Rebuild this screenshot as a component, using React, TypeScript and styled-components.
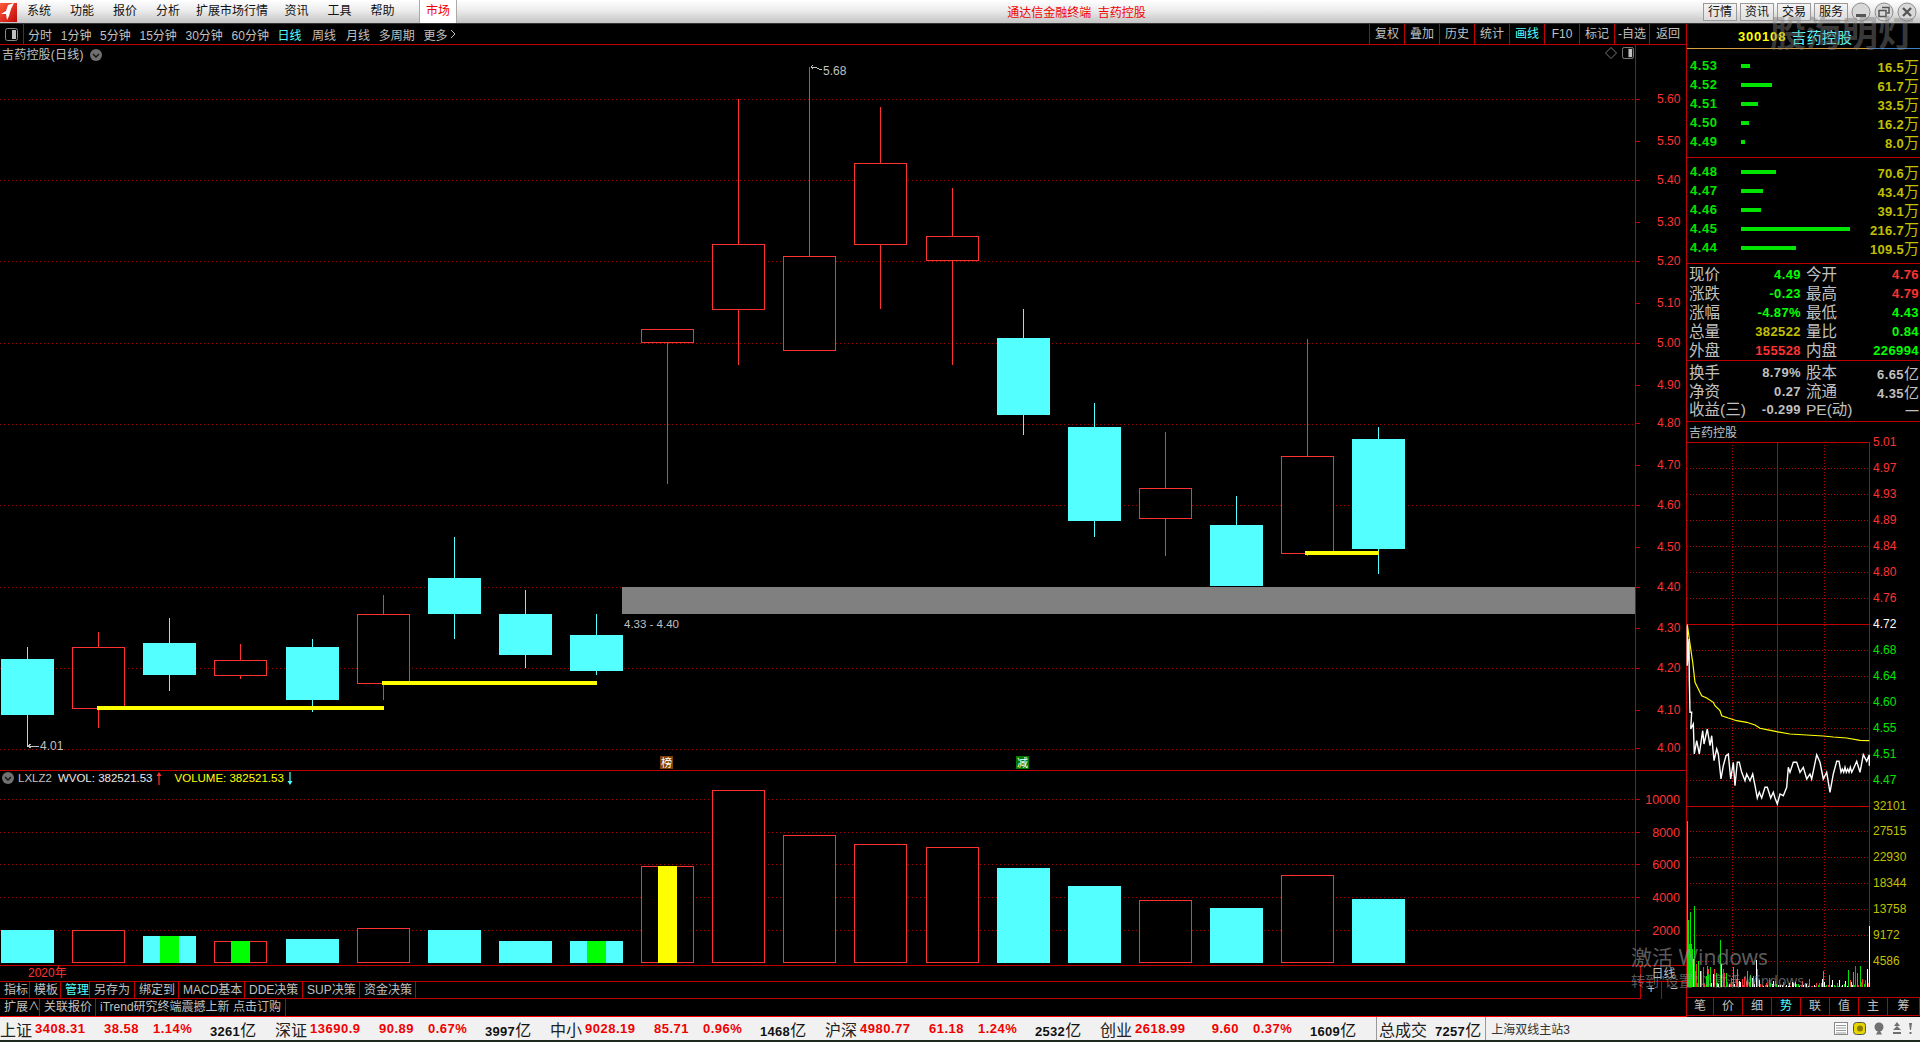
import React from "react";
import styled, { createGlobalStyle } from "styled-components";

const GlobalStyle = createGlobalStyle`
  html, body {
    margin: 0;
    padding: 0;
    background: #000;
    overflow: hidden;
  }
  body {
    font-family: "Liberation Sans", "Noto Sans CJK SC", sans-serif;
    font-size: 12px;
    color: #c0c0c0;
  }
`;

const FRAME = "#c00000";
const RED = "#ff3232";
const CYAN = "#54ffff";
const GREEN = "#00e600";
const KHAKI = "#c0c000";
const GREY = "#c0c0c0";

const Screen = styled.div`
  position: relative;
  width: 1920px;
  height: 1042px;
  display: flex;
  flex-direction: column;
  overflow: hidden;
  background: #000;
`;

/* title bar */
const TitleBar = styled.div`
  height: 23px;
  flex: none;
  display: flex;
  align-items: center;
  color: #111;
  background: linear-gradient(#ffffff, #ececec 45%, #c4c4c4);
  border-bottom: 1px solid #333;
`;
const Logo = styled.svg`
  width: 17px;
  height: 20px;
  margin-right: 0.5px;
  flex: none;
`;
const Menu = styled.div<{ $l?: number; $r?: number }>`
  padding: 0 ${(p) => p.$r ?? 9.5}px 0 ${(p) => p.$l ?? 9.5}px;
  line-height: 23px;
  white-space: nowrap;
`;
const MarketTab = styled.div`
  width: 38px;
  height: 23px;
  margin-left: 15px;
  box-sizing: border-box;
  line-height: 22px;
  text-align: center;
  color: #f00000;
  background: #fff;
  border-left: 1px solid #aaa;
  border-right: 1px solid #aaa;
`;
const AppTitle = styled.div`
  margin-left: 550px;
  color: #f00000;
  white-space: nowrap;
`;
const QuickButtons = styled.div`
  margin-left: auto;
  display: flex;
  align-items: center;
  gap: 3px;
  padding-right: 3px;
`;
const QuickButton = styled.div`
  width: 34px;
  height: 18px;
  box-sizing: border-box;
  border: 1px solid #9a9a9a;
  line-height: 16px;
  text-align: center;
  background: linear-gradient(#f4f4f4, #dcdcdc);
`;
const WindowButton = styled.svg`
  width: 20px;
  height: 20px;
  flex: none;
`;

/* main body */
const Body = styled.div`
  flex: none;
  height: 993px;
  display: grid;
  grid-template-columns: 1686px 234px;
`;
const LeftColumn = styled.div`
  position: relative;
  display: flex;
  flex-direction: column;
`;
const Toolbar = styled.div`
  height: 20px;
  flex: none;
  display: flex;
  align-items: center;
  border-bottom: 1px solid ${FRAME};
`;
const SideIconCell = styled.div`
  width: 23px;
  height: 20px;
  display: flex;
  align-items: center;
  justify-content: center;
  border-right: 1px solid ${FRAME};
  flex: none;
`;
const PeriodList = styled.div`
  display: flex;
  align-items: center;
  gap: 8.7px;
  padding-left: 4px;
`;
const Period = styled.span<{ $on?: boolean; $ml?: number }>`
  color: ${(p) => (p.$on ? CYAN : GREY)};
  margin-left: ${(p) => p.$ml ?? 0}px;
  white-space: nowrap;
  display: inline-flex;
  align-items: center;
  gap: 2px;
`;
const ToolCells = styled.div`
  margin-left: auto;
  display: flex;
  height: 20px;
`;
const ToolCell = styled.div<{ $on?: boolean }>`
  width: 35px;
  box-sizing: border-box;
  border-left: 1px solid ${FRAME};
  line-height: 20px;
  text-align: center;
  white-space: nowrap;
  color: ${(p) => (p.$on ? CYAN : GREY)};
  &:last-child {
    width: 37px;
  }
`;

const ChartPane = styled.div<{ $h: number }>`
  position: relative;
  height: ${(p) => p.$h}px;
  flex: none;
  border-bottom: 1px solid ${FRAME};
`;
const ChartSvg = styled.svg`
  display: block;
  overflow: visible;
  shape-rendering: crispEdges;
`;
const ChartTitle = styled.div`
  position: absolute;
  left: 2px;
  top: 2px;
  display: flex;
  align-items: center;
  gap: 6px;
  line-height: 16px;
  letter-spacing: 0.2px;
`;
const PaneCorner = styled.div`
  position: absolute;
  right: 52px;
  top: 2px;
  display: flex;
  align-items: center;
  gap: 5px;
`;
const VolumeLegend = styled.div`
  position: absolute;
  left: 2px;
  top: 0;
  display: flex;
  align-items: center;
  height: 14px;
  white-space: nowrap;
  font-size: 11.5px;
`;
const LegendText = styled.span<{ $c: string; $ml: number }>`
  color: ${(p) => p.$c};
  margin-left: ${(p) => p.$ml}px;
`;
const AxisText = styled.text<{ $c?: string; $size?: number }>`
  fill: ${(p) => p.$c ?? RED};
  font-size: ${(p) => p.$size ?? 12}px;
  shape-rendering: auto;
`;

const TimeStrip = styled.div`
  height: 15px;
  flex: none;
  box-sizing: content-box;
  padding-left: 28px;
  line-height: 15px;
  color: ${RED};
  border-bottom: 1px solid ${FRAME};
`;
const TabRow = styled.div<{ $h: number; $line: string }>`
  height: ${(p) => p.$h}px;
  flex: none;
  display: flex;
  border-bottom: 1px solid ${(p) => p.$line};
`;
const BottomTab = styled.div<{ $w: number; $on?: boolean }>`
  width: ${(p) => p.$w}px;
  box-sizing: border-box;
  padding-left: 4px;
  border-right: 1px solid ${FRAME};
  line-height: 16px;
  white-space: nowrap;
  overflow: hidden;
  color: ${(p) => (p.$on ? CYAN : GREY)};
`;
const ZoomBox = styled.div`
  position: absolute;
  right: 0;
  bottom: 18px;
  width: 46px;
  height: 33px;
  box-sizing: border-box;
  display: grid;
  grid-template-columns: 20px 1fr;
  grid-template-rows: 16px 1fr;
  background: #000;
  border-left: 1px solid ${FRAME};
`;
const ZoomTitle = styled.div`
  grid-column: 1 / 3;
  text-align: center;
  line-height: 16px;
  border-bottom: 1px solid ${FRAME};
`;
const ZoomSign = styled.div`
  text-align: center;
  line-height: 14px;
  font-size: 13px;
  & + & {
    border-left: 1px solid ${FRAME};
  }
`;

/* right column */
const RightColumn = styled.div`
  display: flex;
  flex-direction: column;
  border-left: 1px solid ${FRAME};
  width: 234px;
  box-sizing: border-box;
`;
const QuoteHeader = styled.div`
  height: 25px;
  flex: none;
  display: flex;
  align-items: center;
  gap: 5px;
  padding-left: 51px;
  background: linear-gradient(90deg, #d8a040 0 182px, #3f80c4 182px) bottom / 100% 1px no-repeat;
`;
const QuoteCode = styled.span`
  color: #ffff00;
  font-weight: 700;
  font-size: 13px;
  letter-spacing: 0.8px;
`;
const QuoteName = styled.span`
  color: ${CYAN};
  font-size: 15px;
  letter-spacing: 0.3px;
`;
const DepthBlock = styled.div<{ $h: number; $top: number }>`
  height: ${(p) => p.$h}px;
  box-sizing: border-box;
  flex: none;
  padding-top: ${(p) => p.$top}px;
  border-bottom: 1px solid ${FRAME};
`;
const DepthRow = styled.div`
  height: 19px;
  display: flex;
  align-items: center;
  padding: 0 1px 0 3px;
`;
const DepthPrice = styled.span`
  width: 51px;
  flex: none;
  color: ${GREEN};
  font-weight: 700;
  font-size: 13px;
  letter-spacing: 0.6px;
`;
const BarTrack = styled.div`
  flex: 1;
`;
const DepthBar = styled.div`
  height: 4px;
  background: ${GREEN};
`;
const DepthVolume = styled.span`
  color: ${KHAKI};
  font-weight: 700;
  font-size: 13px;
  letter-spacing: 0.3px;
  white-space: nowrap;
`;
const Unit = styled.span<{ $size?: number }>`
  font-size: ${(p) => p.$size ?? 15}px;
  font-weight: 400;
  letter-spacing: 0;
`;
const StatBlock = styled.div<{ $h: number; $top: number }>`
  height: ${(p) => p.$h}px;
  box-sizing: border-box;
  flex: none;
  padding-top: ${(p) => p.$top}px;
  border-bottom: 1px solid ${FRAME};
`;
const StatRow = styled.div`
  height: 19px;
  display: grid;
  grid-template-columns: 60px 52px 52px 1fr;
  align-items: center;
  padding: 0 1px 0 2px;
  white-space: nowrap;
`;
const StatLabel = styled.span<{ $second?: boolean }>`
  font-size: 15.5px;
  line-height: 19px;
  color: ${GREY};
  padding-left: ${(p) => (p.$second ? 5 : 0)}px;
`;
const StatValue = styled.span<{ $c: string }>`
  color: ${(p) => p.$c};
  font-weight: 700;
  font-size: 13px;
  letter-spacing: 0.4px;
  text-align: right;
`;
const NameRow = styled.div`
  height: 20px;
  flex: none;
  line-height: 23px;
  padding-left: 2px;
  font-size: 12px;
`;
const MiniPane = styled.div`
  height: 546px;
  flex: none;
`;
const MiniGap = styled.div`
  height: 9px;
  flex: none;
  border-bottom: 1px solid ${FRAME};
`;
const ViewTabs = styled.div`
  height: 17px;
  flex: none;
  display: flex;
  border-bottom: 1px solid ${FRAME};
`;
const ViewTab = styled.div<{ $w: number; $on?: boolean }>`
  width: ${(p) => p.$w}px;
  box-sizing: border-box;
  border-right: 1px solid ${FRAME};
  text-align: center;
  line-height: 17px;
  color: ${(p) => (p.$on ? CYAN : GREY)};
`;

/* status bar */
const StatusBar = styled.div`
  flex: none;
  height: 23px;
  display: flex;
  align-items: center;
  background: #f1f1f1;
  color: #111;
  border-bottom: 2px solid #1d2a1d;
  white-space: nowrap;
`;
const IndexGroup = styled.div`
  width: 275px;
  flex: none;
  display: grid;
  grid-template-columns: 35px 68px 36px 71px 65px;
  align-items: center;
`;
const IndexName = styled.span`
  font-size: 16px;
  color: #222;
`;
const IndexValue = styled.span<{ $right?: boolean; $pad?: boolean }>`
  color: #f00000;
  font-weight: 700;
  font-size: 13px;
  letter-spacing: 0.5px;
  text-align: ${(p) => (p.$right ? "right" : "left")};
  padding-left: ${(p) => (p.$pad ? 14 : 0)}px;
`;
const Turnover = styled.span`
  font-weight: 700;
  font-size: 13px;
  letter-spacing: 0.3px;
  color: #111;
`;
const TotalCell = styled.div`
  height: 23px;
  margin-left: 1px;
  padding: 0 4px 0 2px;
  display: flex;
  align-items: center;
  gap: 8px;
  border-left: 1px solid #999;
  border-right: 1px solid #999;
`;
const Station = styled.span`
  margin-left: 5px;
  color: #333;
`;
const TrayIcons = styled.div`
  margin-left: auto;
  display: flex;
  align-items: center;
  gap: 5px;
  padding-right: 7px;
`;
const TraySvg = styled.svg<{ $ml?: number }>`
  margin-left: ${(p) => p.$ml ?? 0}px;
  flex: none;
`;

/* ghost text over the page */
const GhostMark = styled.div`
  position: absolute;
  left: 1770px;
  top: 13px;
  font-size: 36px;
  font-weight: 700;
  line-height: 44px;
  white-space: nowrap;
  color: rgba(128, 128, 128, 0.45);
  pointer-events: none;
`;
const ActivateNote = styled.div`
  position: absolute;
  left: 1631px;
  top: 943px;
  color: rgba(150, 150, 150, 0.62);
  font-family: "Noto Sans", "Noto Sans CJK SC", sans-serif;
  pointer-events: none;
  white-space: nowrap;
`;
const ActivateTitle = styled.div`
  font-size: 21px;
  line-height: 28px;
`;
const ActivateHint = styled.div`
  font-size: 14px;
  line-height: 20px;
`;

type Candle = [up: boolean, top: number, bottom: number, high: number, low: number];

const candles: Candle[] = [
  [false, 659, 715, 647, 747],
  [true, 647, 708, 632, 728],
  [false, 643, 675, 618, 691],
  [true, 660, 675, 644, 679],
  [false, 647, 700, 639, 712],
  [true, 614, 683, 595, 700],
  [false, 578, 614, 537, 639],
  [false, 614, 655, 590, 668],
  [false, 635, 671, 614, 675],
  [true, 329, 342, 330, 484],
  [true, 244, 309, 99, 365],
  [true, 256, 350, 67, 350],
  [true, 163, 244, 107, 309],
  [true, 236, 260, 188, 365],
  [false, 338, 415, 309, 435],
  [false, 427, 521, 403, 537],
  [true, 488, 518, 432, 556],
  [false, 525, 586, 496, 586],
  [true, 456, 553, 339, 556],
  [false, 439, 549, 427, 574],
];
const candleX = (i: number) => Math.floor(27.7 + i * 71.1);

const priceLabels: [string, number][] = [
  ["5.60", 99], ["5.50", 141], ["5.40", 180], ["5.30", 222], ["5.20", 261], ["5.10", 303],
  ["5.00", 343], ["4.90", 385], ["4.80", 423], ["4.70", 465], ["4.60", 505], ["4.50", 547],
  ["4.40", 587], ["4.30", 628], ["4.20", 668], ["4.10", 710], ["4.00", 748],
];
const priceGrid = [99, 180, 261, 343, 424, 505, 587, 668, 749];

const volumes: [boolean, number][] = [
  [false, 930], [true, 930], [false, 936], [true, 941], [false, 939], [true, 928], [false, 930],
  [false, 941], [false, 941], [true, 866], [true, 790], [true, 835], [true, 844], [true, 847],
  [false, 868], [false, 886], [true, 900], [false, 908], [true, 875], [false, 899],
];
const volumeLabels: [string, number][] = [
  ["10000", 799], ["8000", 832], ["6000", 864], ["4000", 897], ["2000", 930],
];

const asks: [string, number, string][] = [
  ["4.53", 9, "16.5"], ["4.52", 31, "61.7"], ["4.51", 17, "33.5"], ["4.50", 8, "16.2"], ["4.49", 4, "8.0"],
];
const bids: [string, number, string][] = [
  ["4.48", 35, "70.6"], ["4.47", 22, "43.4"], ["4.46", 20, "39.1"], ["4.45", 109, "216.7"], ["4.44", 55, "109.5"],
];

const whitePoints = [
  142,80, 142,200, 147,120, 148,240, 150,340, 155,340, 152,390, 160,375, 163,465, 170,425, 178,465, 188,395, 192,435,
  202,390, 210,440, 215,410, 222,485, 230,450, 235,465, 243,540, 250,500, 258,470, 265,465, 272,540, 280,490, 285,560,
  292,490, 298,490, 305,520, 315,545, 320,525, 330,545, 338,525, 345,560, 352,597, 358,580, 365,597, 375,565, 382,565,
  392,597, 400,580, 405,597, 412,615, 420,585, 430,590, 440,565, 445,505, 450,520, 460,490, 470,490, 480,520, 490,505,
  500,540, 510,525, 515,540, 530,467, 540,490, 550,540, 560,520, 570,580, 580,525, 590,487, 597,487, 603,520, 607,510,
  611,520, 615,505, 619,520, 623,510, 627,520, 631,505, 635,520, 640,510, 650,487, 660,520, 670,467, 680,487, 688,467, 688,500,
];
const yellowPoints = [
  142,76, 148,120, 158,190, 165,250, 175,270, 185,290, 200,297, 220,310, 225,320, 240,335, 245,350, 265,357, 290,365,
  320,370, 345,378, 360,388, 380,392, 410,398, 450,405, 500,408, 550,411, 580,414, 620,417, 660,424, 688,425,
];
const toPolyline = (zoomed: number[]) => {
  const out: string[] = [];
  for (let i = 0; i < zoomed.length; i += 2) {
    out.push(`${(1640 + zoomed[i] / 3).toFixed(1)},${(600 + zoomed[i + 1] / 3).toFixed(1)}`);
  }
  return out.join(" ");
};

const miniLabels: [string, string, number][] = [
  ["5.01", RED, 443], ["4.97", RED, 469], ["4.93", RED, 495], ["4.89", RED, 521], ["4.84", RED, 547], ["4.80", RED, 573],
  ["4.76", RED, 599], ["4.72", "#ffffff", 625], ["4.68", GREEN, 651], ["4.64", GREEN, 677], ["4.60", GREEN, 703],
  ["4.55", GREEN, 729], ["4.51", GREEN, 755], ["4.47", GREEN, 781], ["32101", KHAKI, 807], ["27515", KHAKI, 832],
  ["22930", KHAKI, 858], ["18344", KHAKI, 884], ["13758", KHAKI, 910], ["9172", KHAKI, 936], ["4586", KHAKI, 962],
];

// tick volumes: noise that fades out through the morning, plus the tall opening bars
const noise = (i: number) => {
  const v = Math.sin(i * 12.9898) * 43758.5453;
  return v - Math.floor(v);
};
const tickBars = Array.from({ length: 122 }, (_, i) => {
  const x = 1694 + i * 1.44;
  const fade = 22 * Math.exp(-i / 20) + 4;
  const h = Math.round(noise(i) * noise(i + 300) * 2.2 * fade) + 1;
  const pick = noise(i + 77);
  return { x: Math.round(x), h, c: pick < 0.36 ? RED : pick < 0.68 ? GREEN : "#ffffff" };
});
const openBars: [number, number, string][] = [
  [1687, 822, GREEN], [1688, 921, GREEN], [1689, 945, GREEN], [1690, 913, GREEN], [1691, 945, GREEN], [1692, 950, GREEN],
  [1693, 960, "#ffffff"], [1694, 907, GREEN], [1696, 965, RED], [1698, 962, GREEN], [1700, 972, "#ffffff"], [1703, 968, RED],
  [1708, 975, GREEN], [1720, 941, GREEN], [1721, 965, "#ffffff"], [1733, 968, GREEN], [1756, 961, "#ffffff"], [1757, 970, RED],
  [1823, 972, GREEN], [1829, 976, GREEN], [1848, 971, GREEN], [1853, 973, GREEN], [1855, 967, RED], [1857, 974, GREEN],
  [1860, 967, GREEN], [1862, 980, RED], [1869, 927, "#ffffff"], [1867, 970, "#ffffff"],
];

const PanelIcon = ({ size = 13 }: { size?: number }) => (
  <svg width={size} height={size} viewBox="0 0 13 13">
    <rect x="0.5" y="0.5" width="12" height="12" rx="2" fill="none" stroke="#8a8a8a" />
    <rect x="7" y="2" width="4" height="9" fill="#c0c0c0" />
  </svg>
);

const DownBadge = () => (
  <svg width="12" height="12" viewBox="0 0 12 12">
    <circle cx="6" cy="6" r="6" fill="#707070" />
    <path d="M3 5 L6 8 L9 5" fill="none" stroke="#111" strokeWidth="1.4" />
  </svg>
);

const PriceChart = () => (
  <ChartSvg width="1686" height="725" viewBox="0 45 1686 725">
    {priceGrid.map((y) => (
      <line key={y} x1="0" x2="1635" y1={y + 0.5} y2={y + 0.5} stroke="#a80000" strokeDasharray="1 3" />
    ))}
    <rect x="622" y="587" width="1013" height="27" fill="#808080" />
    {candles.map(([up, top, bottom, high, low], i) => {
      const x = candleX(i);
      const c = up ? RED : CYAN;
      return (
        <g key={i}>
          <line x1={x + 0.5} x2={x + 0.5} y1={high} y2={low} stroke={c} />
          {up ? (
            <rect x={x - 25.5} y={top + 0.5} width="52" height={bottom - top} fill="#000" stroke={c} />
          ) : (
            <rect x={x - 26} y={top} width="53" height={bottom - top} fill={c} />
          )}
        </g>
      );
    })}
    <rect x="97" y="706" width="287" height="4" fill="#ffff00" />
    <rect x="382" y="681" width="215" height="4" fill="#ffff00" />
    <rect x="1305" y="551" width="74" height="4" fill="#ffff00" />
    <AxisText x="624" y="628" $c={GREY} $size={11.5}>4.33 - 4.40</AxisText>
    <path d="M28 746 H39 M28 746 L31 744 M28 746 L31 748" stroke={GREY} fill="none" />
    <AxisText x="40" y="750" $c={GREY}>4.01</AxisText>
    <path d="M811 67 L815 67 L819 69 L822 69 M811 67 L813 65 M811 67 L813 69" stroke={GREY} fill="none" />
    <AxisText x="823" y="75" $c={GREY}>5.68</AxisText>
    <rect x="660" y="756" width="13" height="13" fill="#804000" />
    <AxisText x="661" y="767" $c="#fff" $size={11}>榜</AxisText>
    <rect x="1016" y="756" width="13" height="13" fill="#007a00" />
    <AxisText x="1017" y="767" $c="#fff" $size={11}>减</AxisText>
    <line x1="1635.5" x2="1635.5" y1="45" y2="770" stroke={FRAME} />
    {priceLabels.map(([t, y]) => (
      <g key={t}>
        <line x1="1636" x2="1640" y1={y + 0.5} y2={y + 0.5} stroke={FRAME} />
        <AxisText x="1657" y={y + 4}>{t}</AxisText>
      </g>
    ))}
  </ChartSvg>
);

const VolumeChart = () => (
  <ChartSvg width="1686" height="194" viewBox="0 771 1686 194">
    {volumeLabels.map(([, y]) => (
      <line key={y} x1="0" x2="1635" y1={y + 0.5} y2={y + 0.5} stroke="#a80000" strokeDasharray="1 3" />
    ))}
    {volumes.map(([up, top], i) => {
      const x = candleX(i);
      return up ? (
        <rect key={i} x={x - 25.5} y={top + 0.5} width="52" height={962 - top} fill="#000" stroke={RED} />
      ) : (
        <rect key={i} x={x - 26} y={top} width="53" height={963 - top} fill={CYAN} />
      );
    })}
    <rect x="160" y="936" width="19" height="27" fill="#00ff00" />
    <rect x="231" y="941" width="19" height="22" fill="#00ff00" />
    <rect x="587" y="941" width="19" height="22" fill="#00ff00" />
    <rect x="658" y="866" width="19" height="97" fill="#ffff00" />
    <line x1="1635.5" x2="1635.5" y1="771" y2="965" stroke={FRAME} />
    {volumeLabels.map(([t, y]) => (
      <g key={t}>
        <line x1="1636" x2="1640" y1={y + 0.5} y2={y + 0.5} stroke={FRAME} />
        <AxisText x="1680" y={y + 5} textAnchor="end" $size={12.5}>{t}</AxisText>
      </g>
    ))}
  </ChartSvg>
);

const MiniChart = () => (
  <ChartSvg width="233" height="546" viewBox="1687 443 233 546">
    {miniLabels.map(([t, , y]) =>
      y === 625 || y === 807 || y === 443 ? (
        <line key={t} x1="1687" x2="1869" y1={y + 0.5} y2={y + 0.5} stroke={FRAME} />
      ) : (
        <line key={t} x1="1687" x2="1869" y1={y + 0.5} y2={y + 0.5} stroke="#c00000" strokeDasharray="1 2" />
      ),
    )}
    <line x1="1732.5" x2="1732.5" y1="443" y2="988" stroke="#c00000" strokeDasharray="1 2" />
    <line x1="1824.5" x2="1824.5" y1="443" y2="988" stroke="#c00000" strokeDasharray="1 2" />
    <line x1="1777.5" x2="1777.5" y1="443" y2="988" stroke={FRAME} />
    <line x1="1869.5" x2="1869.5" y1="443" y2="988" stroke={FRAME} />
    <polyline points={toPolyline(whitePoints)} fill="none" stroke="#fff" strokeWidth="1.4" style={{ shapeRendering: "auto" }} />
    <polyline points={toPolyline(yellowPoints)} fill="none" stroke="#ffff00" strokeWidth="1.2" style={{ shapeRendering: "auto" }} />
    {tickBars.map((b, i) => (
      <rect key={i} x={b.x} y={988 - b.h} width="1" height={b.h} fill={b.c} />
    ))}
    {openBars.map(([x, top, c], i) => (
      <rect key={i} x={x} y={top} width="1" height={988 - top} fill={c} />
    ))}
    {miniLabels.map(([t, c, y]) => (
      <AxisText key={t} x="1873" y={y + 4} $c={c}>{t}</AxisText>
    ))}
  </ChartSvg>
);

const StatLine = (p: { a: string; v: string; vc: string; b: string; w: React.ReactNode; wc: string }) => (
  <StatRow>
    <StatLabel>{p.a}</StatLabel>
    <StatValue $c={p.vc}>{p.v}</StatValue>
    <StatLabel $second>{p.b}</StatLabel>
    <StatValue $c={p.wc}>{p.w}</StatValue>
  </StatRow>
);

const IndexCell = (p: { n: string; v: string; c: string; r: string; t: string }) => (
  <IndexGroup>
    <IndexName>{p.n}</IndexName>
    <IndexValue>{p.v}</IndexValue>
    <IndexValue $right>{p.c}</IndexValue>
    <IndexValue $pad>{p.r}</IndexValue>
    <Turnover>{p.t}<Unit $size={16}>亿</Unit></Turnover>
  </IndexGroup>
);

export default function App() {
  return (
    <Screen>
      <GlobalStyle />
      <TitleBar>
        <Logo viewBox="0 0 17 20">
          <defs>
            <linearGradient id="logoRed" x1="0" y1="0" x2="1" y2="1">
              <stop offset="0" stopColor="#ff5a3c" />
              <stop offset="1" stopColor="#c00808" />
            </linearGradient>
          </defs>
          <rect x="0" y="1" width="17" height="19" fill="url(#logoRed)" />
          <path d="M1 12 L6 9 L8 3 L14 1 L11 7 L9 14 L7 18 L6 12 Z" fill="#fff" />
        </Logo>
        {["系统", "功能", "报价", "分析"].map((m) => (
          <Menu key={m}>{m}</Menu>
        ))}
        <Menu $l={6.5} $r={7}>扩展市场行情</Menu>
        {["资讯", "工具", "帮助"].map((m) => (
          <Menu key={m}>{m}</Menu>
        ))}
        <MarketTab>市场</MarketTab>
        <AppTitle>通达信金融终端&nbsp;&nbsp;吉药控股</AppTitle>
        <QuickButtons>
          {["行情", "资讯", "交易", "服务"].map((m) => (
            <QuickButton key={m}>{m}</QuickButton>
          ))}
          <WindowButton viewBox="0 0 20 20">
            <circle cx="10" cy="10" r="9" fill="#d8d8d8" stroke="#8c8c8c" />
            <rect x="5" y="12" width="10" height="3" fill="#555" />
          </WindowButton>
          <WindowButton viewBox="0 0 20 20">
            <circle cx="10" cy="10" r="9" fill="#d8d8d8" stroke="#8c8c8c" />
            <path d="M8 5.5 H15 V11 H13 M5 8.5 H12 V14.5 H5 Z" fill="none" stroke="#555" strokeWidth="1.5" />
          </WindowButton>
          <WindowButton viewBox="0 0 20 20">
            <circle cx="10" cy="10" r="9" fill="#d8d8d8" stroke="#8c8c8c" />
            <path d="M6 6 L14 14 M14 6 L6 14" fill="none" stroke="#555" strokeWidth="2.4" />
          </WindowButton>
        </QuickButtons>
      </TitleBar>

      <Body>
        <LeftColumn>
          <Toolbar>
            <SideIconCell><PanelIcon /></SideIconCell>
            <PeriodList>
              {["分时", "1分钟", "5分钟", "15分钟", "30分钟", "60分钟"].map((t) => (
                <Period key={t}>{t}</Period>
              ))}
              <Period $on>日线</Period>
              <Period $ml={1.8}>周线</Period>
              <Period $ml={1.3}>月线</Period>
              <Period>多周期</Period>
              <Period>
                更多
                <svg width="6" height="10" viewBox="0 0 6 10">
                  <path d="M1 1 L5 5 L1 9" fill="none" stroke="#c0c0c0" />
                </svg>
              </Period>
            </PeriodList>
            <ToolCells>
              {["复权", "叠加", "历史", "统计"].map((t) => (
                <ToolCell key={t}>{t}</ToolCell>
              ))}
              <ToolCell $on>画线</ToolCell>
              {["F10", "标记", "-自选", "返回"].map((t) => (
                <ToolCell key={t}>{t}</ToolCell>
              ))}
            </ToolCells>
          </Toolbar>

          <ChartPane $h={725}>
            <PriceChart />
            <ChartTitle>
              吉药控股(日线)
              <DownBadge />
            </ChartTitle>
            <PaneCorner>
              <svg width="12" height="12" viewBox="0 0 12 12">
                <path d="M6 0.5 L11.5 6 L6 11.5 L0.5 6 Z" fill="none" stroke="#777" />
              </svg>
              <PanelIcon size={12} />
            </PaneCorner>
          </ChartPane>

          <ChartPane $h={194}>
            <VolumeChart />
            <VolumeLegend>
              <DownBadge />
              <LegendText $c={GREY} $ml={4}>LXLZ2</LegendText>
              <LegendText $c="#e8e8e8" $ml={6}>WVOL: 382521.53</LegendText>
              <svg width="6" height="13" viewBox="0 0 6 13" style={{ marginLeft: 3 }}>
                <path d="M3 0 L5.5 4 H3.6 V13 H2.4 V4 H0.5 Z" fill={RED} />
              </svg>
              <LegendText $c="#ffff00" $ml={13}>VOLUME: 382521.53</LegendText>
              <svg width="6" height="13" viewBox="0 0 6 13" style={{ marginLeft: 3 }}>
                <path d="M3 13 L5.5 9 H3.6 V0 H2.4 V9 H0.5 Z" fill={CYAN} />
              </svg>
            </VolumeLegend>
          </ChartPane>

          <TimeStrip>2020年</TimeStrip>
          <TabRow $h={16} $line={FRAME}>
            <BottomTab $w={30}>指标</BottomTab>
            <BottomTab $w={31}>模板</BottomTab>
            <BottomTab $w={29} $on>管理</BottomTab>
            <BottomTab $w={45}>另存为</BottomTab>
            <BottomTab $w={44}>绑定到</BottomTab>
            <BottomTab $w={66}>MACD基本</BottomTab>
            <BottomTab $w={58}>DDE决策</BottomTab>
            <BottomTab $w={57}>SUP决策</BottomTab>
            <BottomTab $w={56}>资金决策</BottomTab>
          </TabRow>
          <TabRow $h={17} $line="#ff0000">
            <BottomTab $w={40}>扩展∧</BottomTab>
            <BottomTab $w={56}>关联报价</BottomTab>
            <BottomTab $w={190}>iTrend研究终端震撼上新 点击订购</BottomTab>
          </TabRow>
          <ZoomBox>
            <ZoomTitle>日线</ZoomTitle>
            <ZoomSign>+</ZoomSign>
            <ZoomSign>−</ZoomSign>
          </ZoomBox>
        </LeftColumn>

        <RightColumn>
          <QuoteHeader>
            <QuoteCode>300108</QuoteCode>
            <QuoteName>吉药控股</QuoteName>
          </QuoteHeader>
          <DepthBlock $h={109} $top={7}>
            {asks.map(([p, w, v]) => (
              <DepthRow key={p}>
                <DepthPrice>{p}</DepthPrice>
                <BarTrack><DepthBar style={{ width: w }} /></BarTrack>
                <DepthVolume>{v}<Unit>万</Unit></DepthVolume>
              </DepthRow>
            ))}
          </DepthBlock>
          <DepthBlock $h={106} $top={4}>
            {bids.map(([p, w, v]) => (
              <DepthRow key={p}>
                <DepthPrice>{p}</DepthPrice>
                <BarTrack><DepthBar style={{ width: w }} /></BarTrack>
                <DepthVolume>{v}<Unit>万</Unit></DepthVolume>
              </DepthRow>
            ))}
          </DepthBlock>
          <StatBlock $h={97} $top={1}>
            <StatLine a="现价" v="4.49" vc="#00ff00" b="今开" w="4.76" wc={RED} />
            <StatLine a="涨跌" v="-0.23" vc="#00ff00" b="最高" w="4.79" wc={RED} />
            <StatLine a="涨幅" v="-4.87%" vc="#00ff00" b="最低" w="4.43" wc="#00ff00" />
            <StatLine a="总量" v="382522" vc={KHAKI} b="量比" w="0.84" wc="#00ff00" />
            <StatLine a="外盘" v="155528" vc={RED} b="内盘" w="226994" wc="#00ff00" />
          </StatBlock>
          <StatBlock $h={61} $top={1}>
            <StatLine a="换手" v="8.79%" vc={GREY} b="股本" w={<>6.65<Unit>亿</Unit></>} wc={GREY} />
            <StatLine a="净资" v="0.27" vc={GREY} b="流通" w={<>4.35<Unit>亿</Unit></>} wc={GREY} />
            <StatLine a="收益(三)" v="-0.299" vc={GREY} b="PE(动)" w="—  " wc={GREY} />
          </StatBlock>
          <NameRow>吉药控股</NameRow>
          <MiniPane>
            <MiniChart />
          </MiniPane>
          <MiniGap />
          <ViewTabs>
            <ViewTab $w={27}>笔</ViewTab>
            <ViewTab $w={29}>价</ViewTab>
            <ViewTab $w={29}>细</ViewTab>
            <ViewTab $w={29} $on>势</ViewTab>
            <ViewTab $w={29}>联</ViewTab>
            <ViewTab $w={29}>值</ViewTab>
            <ViewTab $w={29}>主</ViewTab>
            <ViewTab $w={32}>筹</ViewTab>
          </ViewTabs>
        </RightColumn>
      </Body>

      <StatusBar>
        <IndexCell n="上证" v="3408.31" c="38.58" r="1.14%" t="3261" />
        <IndexCell n="深证" v="13690.9" c="90.89" r="0.67%" t="3997" />
        <IndexCell n="中小" v="9028.19" c="85.71" r="0.96%" t="1468" />
        <IndexCell n="沪深" v="4980.77" c="61.18" r="1.24%" t="2532" />
        <IndexCell n="创业" v="2618.99" c="9.60" r="0.37%" t="1609" />
        <TotalCell>
          <IndexName>总成交</IndexName>
          <Turnover>7257<Unit $size={16}>亿</Unit></Turnover>
        </TotalCell>
        <Station>上海双线主站3</Station>
        <TrayIcons>
          <TraySvg width="14" height="13" viewBox="0 0 14 13">
            <rect x="0.5" y="0.5" width="13" height="12" fill="#fff" stroke="#888" />
            <path d="M2 3.5 H12 M2 6 H12 M2 8.5 H12 M2 11 H12" stroke="#999" />
          </TraySvg>
          <TraySvg width="13" height="13" viewBox="0 0 13 13">
            <rect x="0.5" y="0.5" width="12" height="12" rx="3" fill="#e6d600" stroke="#555" />
            <circle cx="7" cy="6.5" r="3" fill="#8a7a00" />
          </TraySvg>
          <TraySvg $ml={2} width="12" height="13" viewBox="0 0 12 13">
            <circle cx="6" cy="5" r="4.5" fill="#707070" />
            <path d="M3 12.5 H9 L6 7 Z" fill="#707070" />
          </TraySvg>
          <TraySvg $ml={2} width="10" height="13" viewBox="0 0 10 13">
            <path d="M5 0 L8 4 H2 Z M5 4 L9 8 H1 Z M1 10 H9 V12 H1 Z" fill="#707070" />
          </TraySvg>
          <TraySvg $ml={1} width="5" height="13" viewBox="0 0 5 13">
            <path d="M1 1 H4 L3 8 H2 Z M1.5 10 H3.5 V12 H1.5 Z" fill="#707070" />
          </TraySvg>
        </TrayIcons>
      </StatusBar>

      <GhostMark>股海明灯</GhostMark>
      <ActivateNote>
        <ActivateTitle>激活 Windows</ActivateTitle>
        <ActivateHint>转到"设置"以激活 Windows。</ActivateHint>
      </ActivateNote>
    </Screen>
  );
}
